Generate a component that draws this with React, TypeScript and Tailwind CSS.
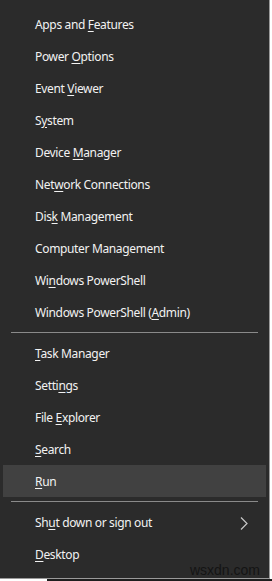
const groups: { label: string; key: number; active?: boolean; arrow?: boolean }[][] = [
  [
    { label: "Apps and Features", key: 9 },
    { label: "Power Options", key: 6 },
    { label: "Event Viewer", key: 6 },
    { label: "System", key: 1 },
    { label: "Device Manager", key: 7 },
    { label: "Network Connections", key: 3 },
    { label: "Disk Management", key: 3 },
    { label: "Computer Management", key: 13 },
    { label: "Windows PowerShell", key: 2 },
    { label: "Windows PowerShell (Admin)", key: 20 },
  ],
  [
    { label: "Task Manager", key: 0 },
    { label: "Settings", key: 5 },
    { label: "File Explorer", key: 5 },
    { label: "Search", key: 0 },
    { label: "Run", key: 0, active: true },
  ],
  [
    { label: "Shut down or sign out", key: 2, arrow: true },
    { label: "Desktop", key: 0 },
  ],
];

const Label = ({ label, k }: { label: string; k: number }) => (
  <span>
    {label.slice(0, k)}
    <span className="underline underline-offset-2">{label[k]}</span>
    {label.slice(k + 1)}
  </span>
);

export default function App() {
  return (
    <div className="w-[272px] h-[581px] bg-white flex flex-col font-['Noto_Sans','Liberation_Sans',sans-serif]">
      <div className="relative w-[270px] h-[579px] bg-[#2b2b2b] border-r border-b border-[#9a9a9a] pt-2 text-[12px] tracking-[-0.35px] text-[#f2f2f2]">
        {groups.map((g, gi) => (
          <div key={gi}>
            {gi > 0 && <div className="mx-[11px] my-1 h-px bg-[#8a8a8a]" />}
            {g.map((item) => (
              <div
                key={item.label}
                className={`mx-[3px] h-8 pl-8 pr-3 pt-[2px] flex items-center justify-between ${
                  item.active ? "bg-[#414141]" : ""
                }`}
              >
                <Label label={item.label} k={item.key} />
                {item.arrow && (
                  <svg width="8" height="13" viewBox="0 0 8 13" className="mr-[6px]">
                    <path d="M1 0.5 L7 6.5 L1 12.5" fill="none" stroke="#c8c8c8" strokeWidth="1.2" />
                  </svg>
                )}
              </div>
            ))}
          </div>
        ))}
        <span className="absolute right-[9px] bottom-[1px] leading-none font-['Liberation_Sans',sans-serif] text-[14px] tracking-normal text-[#141414]">
          wsxdn.com
        </span>
      </div>
      <div className="flex h-[2px]">
        <div className="w-[47px] bg-white" />
        <div className="flex-1 bg-[#1e1e1e]" />
      </div>
    </div>
  );
}
